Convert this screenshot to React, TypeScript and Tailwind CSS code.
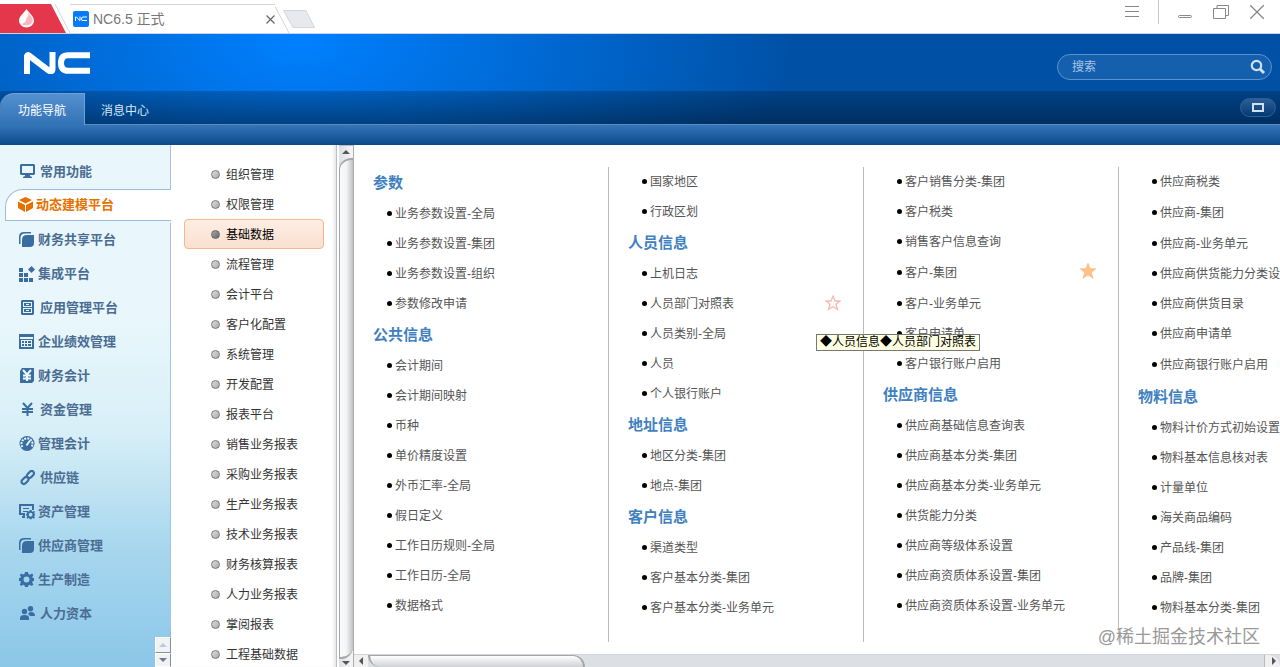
import { useState } from "react";
import type { ReactNode } from "react";
import clsx from "clsx";

type Entry = { text: string; head?: boolean; tall?: boolean; star?: "on" | "off"; tip?: string };

const h = (text: string): Entry => ({ text, head: true });
const i = (text: string): Entry => ({ text });

const COLUMNS: Entry[][] = [
  [
    h("参数"),
    i("业务参数设置-全局"),
    i("业务参数设置-集团"),
    i("业务参数设置-组织"),
    i("参数修改申请"),
    h("公共信息"),
    i("会计期间"),
    i("会计期间映射"),
    i("币种"),
    i("单价精度设置"),
    i("外币汇率-全局"),
    i("假日定义"),
    i("工作日历规则-全局"),
    i("工作日历-全局"),
    i("数据格式"),
  ],
  [
    i("国家地区"),
    i("行政区划"),
    h("人员信息"),
    i("上机日志"),
    { text: "人员部门对照表", star: "off", tip: "◆人员信息◆人员部门对照表" },
    i("人员类别-全局"),
    i("人员"),
    i("个人银行账户"),
    h("地址信息"),
    i("地区分类-集团"),
    i("地点-集团"),
    h("客户信息"),
    i("渠道类型"),
    i("客户基本分类-集团"),
    i("客户基本分类-业务单元"),
  ],
  [
    i("客户销售分类-集团"),
    i("客户税类"),
    i("销售客户信息查询"),
    { text: "客户-集团", star: "on", tall: true },
    i("客户-业务单元"),
    i("客户申请单"),
    i("客户银行账户启用"),
    h("供应商信息"),
    i("供应商基础信息查询表"),
    i("供应商基本分类-集团"),
    i("供应商基本分类-业务单元"),
    i("供货能力分类"),
    i("供应商等级体系设置"),
    i("供应商资质体系设置-集团"),
    i("供应商资质体系设置-业务单元"),
  ],
  [
    i("供应商税类"),
    { text: "供应商-集团", tall: true },
    i("供应商-业务单元"),
    i("供应商供货能力分类设置"),
    i("供应商供货目录"),
    i("供应商申请单"),
    { text: "供应商银行账户启用", tall: true },
    h("物料信息"),
    i("物料计价方式初始设置"),
    i("物料基本信息核对表"),
    i("计量单位"),
    i("海关商品编码"),
    i("产品线-集团"),
    i("品牌-集团"),
    i("物料基本分类-集团"),
  ],
];

const GROUPS = [
  "组织管理", "权限管理", "基础数据", "流程管理", "会计平台", "客户化配置",
  "系统管理", "开发配置", "报表平台", "销售业务报表", "采购业务报表", "生产业务报表",
  "技术业务报表", "财务核算报表", "人力业务报表", "掌阅报表", "工程基础数据",
];

const leaf = (
  <>
    <path d="M0 12V5Q0 0 5 0H12V1.500H6Q1.500 1.500 1.500 6V12Z" />
    <path d="M3 8Q3 3 8 3H15V11Q15 15 11 15H3Z" />
  </>
);

const gear = (
  <path
    fillRule="evenodd"
    d="M6 0H9L9.5 2.2L11 2.8L13 1.6L14.4 3L13.2 5L13.8 6H15V9H13.8L13.2 10.5L14.4 12.4L12.6 14L11 12.8L9.5 13.3L9 15H6L5.5 13.3L4 12.8L2.2 14L.8 12.4L1.9 10.5L1.4 9H0V6H1.4L1.9 4.8L.8 3L2.4 1.4L4 2.5L5.5 2ZM7.5 4.5A3 3 0 1 0 7.5 10.5A3 3 0 1 0 7.5 4.5Z"
  />
);

// wide: icons whose label starts two pixels further right
const MODULES: { name: string; icon: ReactNode; wide?: boolean }[] = [
  {
    name: "常用功能",
    wide: true,
    icon: <path fillRule="evenodd" d="M1 0H14L15 1V10L14 11H10V12L12 13V14H3V13L5 12V11H1L0 10V1ZM2 2V9H13V2Z" />,
  },
  {
    name: "动态建模平台",
    icon: (
      <>
        <path d="M7.5 0L14 3L7.5 6.5L1 3Z" />
        <path d="M0 4.5L7 8V15L0 11Z" />
        <path d="M15 4.5L8 8V15L15 11Z" />
      </>
    ),
  },
  { name: "财务共享平台", icon: leaf },
  {
    name: "集成平台",
    icon: (
      <>
        <path d="M0 2H4V6H0ZM0 7H4V11H0ZM0 12H4V16H0ZM5 7H9V11H5ZM5 12H9V16H5ZM10 12H14V16H10Z" />
        <path d="M12.500 0L16 3.500L12.500 7L9 3.500Z" />
      </>
    ),
  },
  {
    name: "应用管理平台",
    wide: true,
    icon: (
      <path
        fillRule="evenodd"
        d="M2 0H13L14 1V14L13 15H2L1 14V1ZM3 2V7H12V2ZM3 8V13H12V8ZM4 3H11V6H4ZM4 9H11V12H4ZM6 4V5H9V4ZM6 10V11H9V10Z"
      />
    ),
  },
  {
    name: "企业绩效管理",
    icon: (
      <path
        fillRule="evenodd"
        d="M0 0H15V15H0ZM1 3V5H14V3ZM2 6V13H13V6ZM3 7H5V9H3ZM6 7H8V9H6ZM9 7H12V9H9ZM3 10H5V12H3ZM6 10H8V12H6ZM9 10H12V12H9Z"
      />
    ),
  },
  {
    name: "财务会计",
    icon: (
      <>
        <path d="M3 0H15V13L13 15H1V3Z" />
        <path d="M4 2L8 6.500L12 2M8 6V13M4 7.500H12M4 10.500H12" fill="none" stroke="#eef9fc" strokeWidth="2" />
      </>
    ),
  },
  {
    name: "资金管理",
    wide: true,
    icon: <path d="M3 1L7.500 6L12 1M7.500 6V14M2 7H13M2 10H13" fill="none" stroke="currentColor" strokeWidth="2" />,
  },
  {
    name: "管理会计",
    icon: (
      <>
        <circle cx="8" cy="7.500" r="7.500" />
        <path d="M3.500 11A5.500 5.500 0 1 1 12.500 11" fill="none" stroke="#e3f4f9" strokeWidth="2" strokeDasharray="2 1" />
        <path d="M7.500 9.500L11 4.500" stroke="#e3f4f9" strokeWidth="2" />
        <path d="M3.500 12Q8 9 12.500 12L8 14Z" />
      </>
    ),
  },
  {
    name: "供应链",
    wide: true,
    icon: (
      <g fill="none" stroke="currentColor" strokeWidth="2.200">
        <rect x="-4" y="-2.400" width="8" height="4.800" rx="2.400" transform="translate(10.500 4.500) rotate(-45)" />
        <rect x="-4" y="-2.400" width="8" height="4.800" rx="2.400" transform="translate(5 10.500) rotate(-45)" />
      </g>
    ),
  },
  {
    name: "资产管理",
    icon: (
      <>
        <path d="M0 0H15V6H13V2H2V9H6V14H3V12H4V11H0ZM4 4H10V5H4ZM4 7H8V8H4Z" />
        <g transform="translate(7 6) scale(.62)">{gear}</g>
      </>
    ),
  },
  { name: "供应商管理", icon: leaf },
  { name: "生产制造", icon: gear },
  {
    name: "人力资本",
    wide: true,
    icon: (
      <>
        <circle cx="4.500" cy="5.500" r="2.700" />
        <path d="M0 14V12Q0 9 4.500 9Q9 9 9 12V14Z" />
        <circle cx="10.500" cy="2.700" r="2.700" />
        <path d="M8 8Q9 6 11 6Q15 6 15 10H10Z" />
      </>
    ),
  },
];

function Star({ on }: { on: boolean }) {
  return (
    <svg width="16" height="16" viewBox="0 0 16 16" className="absolute top-1.5 right-[22px]">
      <path
        d="M8 1L10 6H15L11 9.300L12.500 14.500L8 11.500L3.500 14.500L5 9.300L1 6H6Z"
        fill={on ? "#ffbf86" : "#fff"}
        stroke={on ? "#ffbf86" : "#f5bcae"}
        strokeWidth="1.300"
      />
    </svg>
  );
}

function TitleBar() {
  return (
    <div className="flex h-[34px] shrink-0 items-stretch border-b border-[#c5d6e6] bg-white">
      <svg width="70" height="33" viewBox="0 0 70 33" className="shrink-0">
        <path d="M0 4H51L66 33H0Z" fill="#e5374c" />
        <path d="M55 4L70 33" stroke="#d3d5dc" fill="none" />
        <path d="M26.500 9C24 13 19 16 19 21A7.500 6.500 0 0 0 34 21C34 16 29 13 26.500 9Z" fill="#fff" />
        <path d="M27 10C31 16 26 17 26 20C25 23 22 24 21 24C26 27 34 25 32.500 19C31 15 29 14 27 10Z" fill="#f6b9c0" />
      </svg>
      <div className="mt-1 flex w-[205px] items-center border-t border-[#d3d5dc] pl-[3px]">
        <svg width="16" height="16" viewBox="0 0 16 16">
          <rect width="16" height="16" rx="2" fill="#057bfb" />
          <path d="M2.500 10V6H3.500L6.500 9.500H7V5.500M14 6H10Q8.500 6 8.500 8T10 9.500H14" fill="none" stroke="#fff" />
        </svg>
        <span className="ml-1 text-[14px] text-[#777]">NC6.5 正式</span>
        <button aria-label="关闭标签" className="ml-auto">
          <svg width="9" height="9" viewBox="0 0 9 9" stroke="#666" strokeWidth="1.200">
            <path d="M.5.5L8.500 8.500M8.500.5L.5 8.500" />
          </svg>
        </button>
      </div>
      <svg width="42" height="33" viewBox="0 0 42 33" fill="none" stroke="#d3d5dc">
        <path d="M-1 4.500L14 33" />
        <path d="M8.500 10.500H31L39.500 27.500H18Z" fill="#e8e9ee" />
      </svg>
      <div className="ml-auto flex items-start gap-[21px] pr-4 text-[#888]">
        <button aria-label="菜单" className="mt-1.5">
          <svg width="14" height="12" viewBox="0 0 14 12" stroke="currentColor">
            <path d="M0 .5H14M0 5.500H14M0 10.500H14" />
          </svg>
        </button>
        <span className="-ml-0.5 h-6 w-px bg-[#c4c8d0]" />
        <button aria-label="最小化" className="mt-[15px] -ml-0.5">
          <svg width="14" height="3" viewBox="0 0 14 3" fill="none" stroke="currentColor">
            <rect x=".5" y=".5" width="13" height="2" rx="1" />
          </svg>
        </button>
        <button aria-label="还原" className="mt-[5px]">
          <svg width="16" height="14" viewBox="0 0 16 14" fill="none" stroke="currentColor">
            <path d="M.5 3.500H12.500V13.500H.5ZM4 3V.5H15.500V10.500H13" />
          </svg>
        </button>
        <button aria-label="关闭" className="mt-[5px]">
          <svg width="14" height="14" viewBox="0 0 14 14" stroke="currentColor" strokeWidth="1.300">
            <path d="M0 0L14 14M14 0L0 14" />
          </svg>
        </button>
      </div>
    </div>
  );
}

function Header() {
  return (
    <header className="shrink-0 bg-[#0051a6] bg-[radial-gradient(ellipse_490px_260px_at_300px_8px,#0080ff_0%,#0051a6_100%)]">
      <div className="flex h-[57px] items-center justify-between pr-2 pl-6">
        <svg width="67" height="22" viewBox="0 0 67 22" fill="none" stroke="#fff" strokeWidth="6">
          <path d="M3 22V4Q3.500 2.500 5 3.500L24.500 18.500Q28.500 20.500 28.500 17V0" />
          <path d="M66 3.200H44Q37 3.200 37 11T44 18.800H66" />
        </svg>
        <label className="mt-2 flex h-[26px] w-[215px] items-center rounded-full border border-[#5b92cc] bg-[#1560ae] pr-[5px] pl-3.5">
          <input
            type="text"
            aria-label="搜索"
            placeholder="搜索"
            className="min-w-0 flex-1 bg-transparent text-[12px] text-white outline-none placeholder:text-[#a9c5e3]"
          />
          <svg width="16" height="16" viewBox="0 0 16 16" fill="none" stroke="#cfe0f2">
            <circle cx="6.500" cy="6.500" r="4.700" strokeWidth="2.200" />
            <path d="M10 10L14 14" strokeWidth="3" />
          </svg>
        </label>
      </div>
      <nav className="flex h-[34px] items-end bg-linear-to-b from-black/20 to-black/43 text-[12px] text-[#d7e6f6]">
        <button className="h-8 w-[85px] rounded-tl-[14px] border-t border-r border-[#6fa0d8] bg-linear-to-b from-[#5591d0] to-[#3272b5] pt-0.5 text-white">
          功能导航
        </button>
        <button className="h-8 flex-1 border-b border-[#5a8cc4] pt-1 pl-4 text-left">消息中心</button>
        <div className="flex h-8 items-center border-b border-[#5a8cc4] pr-1">
          <button
            aria-label="全屏"
            className="mb-0.5 flex h-[19px] w-9 items-center justify-center rounded-full border border-[#2f6195] bg-linear-to-b from-[#2c5f96] to-[#003a75]"
          >
            <span className="h-[9px] w-3 border-2 border-[#cfe0f0]" />
          </button>
        </div>
      </nav>
      <div className="h-5 bg-linear-to-b from-[#3475b8] to-[#0a4a8a]" />
    </header>
  );
}

function Sidebar({ active, onPick }: { active: string; onPick: (name: string) => void }) {
  return (
    <nav className="relative flex w-[171px] shrink-0 flex-col bg-[linear-gradient(#e9f7fc_0px,#e9f7fc_170px,#d8eff7_285px,#a8d7ee_400px,#8bc7e8_522px)]">
      <div className="h-[10px] border-r border-[#a5c4e2]" />
      {MODULES.map((m) => (
        <div key={m.name} className={clsx("flex h-[34px] items-start pl-[5px]", m.name !== active && "border-r border-[#a5c4e2]")}>
          <button
            onClick={() => onPick(m.name)}
            className={clsx(
              "flex h-8 flex-1 items-center border-y text-[13px] font-bold",
              m.name === active
                ? "rounded-tl-[18px] border-l border-[#9dbcdc] bg-white pl-3 text-[#e57200]"
                : "border-transparent pt-0.5 text-[#4a6c93]",
              m.name !== active && (m.wide ? "gap-1 pl-[15px]" : "gap-[3px] pl-3.5")
            )}
          >
            <svg
              width="16"
              height="16"
              viewBox="0 0 16 16"
              className={clsx("shrink-0 fill-current", m.name === active ? "mr-0.5 text-[#e57200]" : "text-[#3a6ea3]")}
            >
              {m.icon}
            </svg>
            {m.name}
          </button>
        </div>
      ))}
      <div className="flex-1 border-r border-[#8db8dc]" />
      <div className="absolute right-0 bottom-0 flex flex-col">
        <button aria-label="上移" className="flex h-4 w-4 items-center justify-center border border-white border-r-[#8090a4] border-b-[#8090a4] bg-[#f2f2f2]">
          <span className="border-x-4 border-b-4 border-x-transparent border-b-[#b4cce6]" />
        </button>
        <button aria-label="下移" className="flex h-[14px] w-4 items-center justify-center border border-white border-r-[#8090a4] bg-[#f2f2f2]">
          <span className="border-x-4 border-t-4 border-x-transparent border-t-[#6a7c90]" />
        </button>
      </div>
    </nav>
  );
}

function GroupList({ active, onPick }: { active: string; onPick: (name: string) => void }) {
  return (
    <ul className="w-[166px] shrink-0 overflow-hidden border-r border-[#b9bdc6] pt-[14px] pr-3 pl-[13px] shadow-[inset_-4px_0_4px_-3px_#d8dade]">
      {GROUPS.map((g) => (
        <li key={g}>
          <button
            onClick={() => onPick(g)}
            className={clsx(
              "flex h-[30px] w-full items-center gap-1.5 rounded border pl-[26px] text-[12px]",
              g === active
                ? "border-[#f2b98f] bg-linear-to-b from-[#feeee4] to-[#f9e0d0] text-black"
                : "border-transparent text-[#333]"
            )}
          >
            <span
              className={clsx(
                "h-[9px] w-[9px] rounded-full border bg-linear-to-br",
                g === active ? "border-[#666] from-[#aaa] to-[#666]" : "border-[#777] from-[#ddd] to-[#aaa]"
              )}
            />
            <span className="pt-0.5">{g}</span>
          </button>
        </li>
      ))}
    </ul>
  );
}

function VerticalBar() {
  return (
    <div className="ml-0.5 flex w-[15px] shrink-0 flex-col border-r border-[#a9adb3] bg-linear-to-r from-[#dcdfe4] to-[#f6f6f6]">
      <div className="flex h-[13px] shrink-0 items-center justify-center border-t border-[#bbb]">
        <span className="border-x-4 border-b-4 border-x-transparent border-b-[#555]" />
      </div>
      <div className="flex-1 rounded-tl-[12px] rounded-br-[12px] border-t-2 border-b-2 border-l border-[#a6a6a6] bg-linear-to-r from-[#fafafa] via-[#f4f4f4] to-[#bfc1c4]" />
      <div className="flex h-2 shrink-0 items-center justify-center">
        <span className="border-x-4 border-t-4 border-x-transparent border-t-[#555]" />
      </div>
    </div>
  );
}

function EntryRow({ entry }: { entry: Entry }) {
  if (entry.head) {
    return <h2 className="flex h-8 items-center pl-[19px] text-[15px] font-bold text-[#4080c0]">{entry.text}</h2>;
  }
  return (
    <div className={clsx("relative flex items-center pl-[33px] text-[12px] text-[#555]", entry.tall ? "h-8" : "h-[30px]")}>
      <span className="mr-[3px] mb-0.5 h-[5px] w-[5px] rounded-full bg-black" />
      <a href="#" className="whitespace-nowrap">{entry.text}</a>
      {entry.star && <Star on={entry.star === "on"} />}
      {entry.tip && (
        <div
          role="tooltip"
          className="absolute top-[45px] left-[207px] z-10 border border-[#777] bg-[#ffffe1] px-[3px] text-[12px] leading-[15px] whitespace-nowrap text-black"
        >
          {entry.tip}
        </div>
      )}
    </div>
  );
}

export default function App() {
  const [moduleName, setModuleName] = useState("动态建模平台");
  const [group, setGroup] = useState("基础数据");

  return (
    <div className="flex h-screen flex-col overflow-hidden bg-white font-['Liberation_Sans','Noto_Sans_CJK_SC',sans-serif]">
      <TitleBar />
      <Header />
      <div className="flex min-h-0 flex-1">
        <Sidebar active={moduleName} onPick={setModuleName} />
        <GroupList active={group} onPick={setGroup} />
        <VerticalBar />
        <main className="relative flex min-w-0 flex-1 flex-col">
          <div className="flex min-h-0 flex-1 overflow-hidden pt-[22px] pb-3">
            {COLUMNS.map((col, n) => (
              <section key={n} className="w-[255px] shrink-0 border-r border-[#bbb]">
                {col.map((entry) => (
                  <EntryRow key={entry.text} entry={entry} />
                ))}
              </section>
            ))}
          </div>
          <div className="flex h-[13px] shrink-0 border-t border-[#d2d6dc] bg-[#dcdfe4]">
            <div className="flex w-[14px] items-center justify-center bg-[#f0f0f0]">
              <span className="border-y-4 border-r-4 border-y-transparent border-r-[#555]" />
            </div>
            <div className="w-[217px] rounded-tr-[12px] rounded-bl-[12px] border-t border-r-2 border-l-2 border-[#a6a6a6] bg-linear-to-b from-white to-[#cfd1d4]" />
            <div className="ml-auto flex w-4 items-center justify-end rounded-tr-[12px] border-l border-[#bbb] bg-[#f0f0f0] pr-1">
              <span className="border-y-4 border-l-4 border-y-transparent border-l-[#555]" />
            </div>
          </div>
          <div className="absolute right-5 bottom-5 text-[18px] leading-5 text-[#999] [text-shadow:1px_1px_1px_#fff]">
            @稀土掘金技术社区
          </div>
        </main>
      </div>
    </div>
  );
}
